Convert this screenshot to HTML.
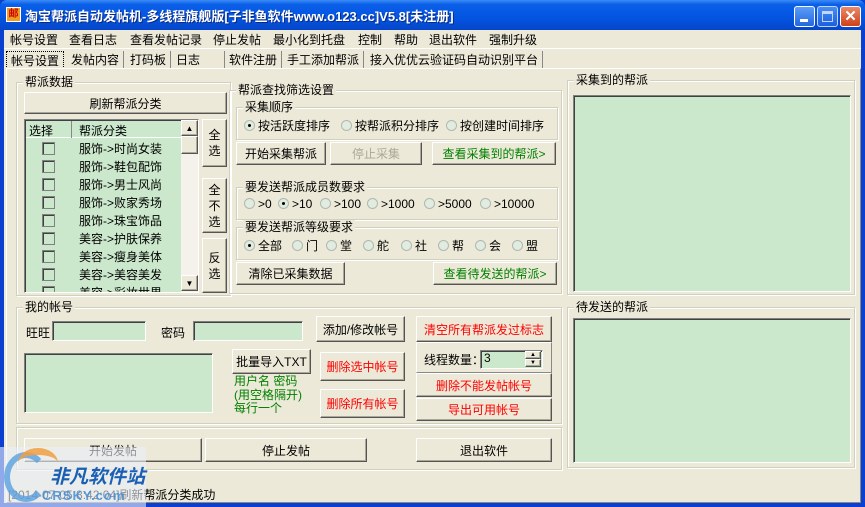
<!DOCTYPE html>
<html><head><meta charset="utf-8"><style>
*{box-sizing:border-box;margin:0;padding:0}
body{width:865px;height:507px;overflow:hidden;background:#0a3fd0;font-family:"Liberation Sans","Noto Sans CJK SC",sans-serif;font-size:12px;color:#000;position:relative}
.a{position:absolute}
#title{left:0;top:0;width:865px;height:30px;background:linear-gradient(#3b8cf5 0,#0a5fe8 15%,#0454e2 60%,#0546c8 100%);border-radius:7px 7px 0 0}
#title .t{left:25px;top:6px;color:#fff;font-weight:bold;font-size:13px;white-space:nowrap;text-shadow:1px 1px #0a2a80}
.ico{left:6px;top:7px;width:15px;height:15px;background:#f0a020;border:1px solid #fff;font-size:10px;color:#c00;text-align:center;line-height:13px;font-weight:bold}
.wb{top:6px;width:21px;height:21px;border:1px solid #fff;border-radius:3px;background:linear-gradient(#5b9df8,#2466e0)}
#client{left:4px;top:30px;width:857px;height:473px;background:#ece9d8}
.menu span{position:absolute;top:0;white-space:nowrap}
.tabs .tab{position:absolute;top:0;height:18px;border-right:1px solid #888;white-space:nowrap;padding:0 4px}
.panel{border-top:1px solid #fff;border-left:1px solid #fff;border-right:1px solid #888;border-bottom:1px solid #888}
.grp{border:1px solid #d0d0bf;box-shadow:inset 1px 1px #fff,1px 1px #fff}
.gt{position:absolute;top:-8px;left:6px;background:#ece9d8;padding:0 2px;white-space:nowrap;line-height:14px}
.btn{position:absolute;background:#ece9d8;border:1px solid;border-color:#fff #555 #555 #fff;box-shadow:inset -1px -1px #aca899;text-align:center;white-space:nowrap;display:flex;align-items:center;justify-content:center}
.red{color:#f00}.grn{color:#008000}
.gr{background:#cce8cc}
.sunk{border:1px solid;border-color:#808080 #fff #fff #808080;box-shadow:inset 1px 1px #404040}
.rad{position:absolute;white-space:nowrap}
.rad i{display:inline-block;width:11px;height:11px;border-radius:50%;background:#e0ece0;border:1px solid #b0b8b0;vertical-align:-1px;margin-right:3px;position:relative}
.rad i.on:after{content:"";position:absolute;left:3px;top:3px;width:3px;height:3px;background:#000;border-radius:50%}
.row{position:absolute;left:1px;width:155px;height:18px;white-space:nowrap}
.row b{position:absolute;left:16px;top:3px;width:13px;height:13px;border:1px solid #808080;background:#cce8cc;box-shadow:inset 1px 1px #404040}
.row span{position:absolute;left:53px;top:1px}
</style></head><body>
<div id="title" class="a"><div class="a ico">邮</div><div class="a t">淘宝帮派自动发帖机-多线程旗舰版[子非鱼软件www.o123.cc]V5.8[未注册]</div>
<div class="a wb" style="left:794px;"><div class="a" style="left:5px;top:12px;width:8px;height:3px;background:#fff"></div></div>
<div class="a wb" style="left:817px;opacity:.75"><div class="a" style="left:4px;top:4px;width:11px;height:11px;border:1px solid #fff;border-top-width:3px"></div></div>
<div class="a wb" style="left:840px;background:linear-gradient(#e88a6a,#d04018);color:#fff;font-weight:bold;font-size:15px;text-align:center;line-height:19px">✕</div>
</div>
<div id="client" class="a">
<div class="a menu" style="left:0;top:1px;width:840px;height:17px">
<span style="left:6px">帐号设置</span><span style="left:65px">查看日志</span><span style="left:126px">查看发帖记录</span><span style="left:209px">停止发帖</span><span style="left:269px">最小化到托盘</span><span style="left:354px">控制</span><span style="left:390px">帮助</span><span style="left:425px">退出软件</span><span style="left:485px">强制升级</span>
</div>
<div class="a" style="left:0;top:18px;width:857px;height:1px;background:#fff"></div>
<div class="a tabs" style="left:2px;top:21px;width:600px;height:18px">
<div class="tab" style="left:0;width:58px;border:1px dotted #000;">帐号设置</div>
<div class="tab" style="left:61px">发帖内容</div><div class="tab" style="left:120px">打码板</div><div class="tab" style="left:166px;width:53px">日志</div><div class="tab" style="left:219px">软件注册</div><div class="tab" style="left:277px">手工添加帮派</div><div class="tab" style="left:360px">接入优优云验证码自动识别平台</div>
</div>
<div class="a panel" style="left:2px;top:38px;width:855px;height:435px"></div>

<div class="a grp" style="left:12px;top:52px;width:215px;height:214px"><div class="gt">帮派数据</div></div>
<div class="btn" style="left:20px;top:62px;width:203px;height:22px">刷新帮派分类</div>
<div class="a sunk gr" style="left:20px;top:89px;width:175px;height:174px;overflow:hidden">
<div class="a" style="left:1px;top:1px;width:155px;height:17px;background:#cce8cc;border-bottom:1px solid #fff"><span class="a" style="left:3px;top:1px">选择</span><div class="a" style="left:45px;top:0;width:1px;height:17px;background:#888"></div><span class="a" style="left:53px;top:1px">帮派分类</span></div>
<div class="row" style="top:19px"><b></b><span>服饰->时尚女装</span></div>
<div class="row" style="top:37px"><b></b><span>服饰->鞋包配饰</span></div>
<div class="row" style="top:55px"><b></b><span>服饰->男士风尚</span></div>
<div class="row" style="top:73px"><b></b><span>服饰->败家秀场</span></div>
<div class="row" style="top:91px"><b></b><span>服饰->珠宝饰品</span></div>
<div class="row" style="top:109px"><b></b><span>美容->护肤保养</span></div>
<div class="row" style="top:127px"><b></b><span>美容->瘦身美体</span></div>
<div class="row" style="top:145px"><b></b><span>美容->美容美发</span></div>
<div class="row" style="top:163px"><b></b><span>美容->彩妆世界</span></div>
<div class="a" style="left:156px;top:0;width:17px;height:172px;background:#f4f2ea">
<div class="btn" style="left:0;top:0;width:17px;height:16px;font-size:8px">▲</div>
<div class="btn" style="left:0;top:16px;width:17px;height:18px"></div>
<div class="btn" style="left:0;top:155px;width:17px;height:16px;font-size:8px">▼</div></div>
</div>
<div class="btn" style="left:198px;top:89px;width:25px;height:48px;line-height:16px">全<br>选</div>
<div class="btn" style="left:198px;top:148px;width:25px;height:55px;line-height:16px">全<br>不<br>选</div>
<div class="btn" style="left:198px;top:208px;width:25px;height:55px;line-height:16px">反<br>选</div>

<div class="a grp" style="left:225px;top:60px;width:333px;height:204px"><div class="gt">帮派查找筛选设置</div></div>
<div class="a grp" style="left:232px;top:77px;width:322px;height:33px"><div class="gt">采集顺序</div></div>
<div class="rad" style="left:240px;top:87px"><i class="on"></i>按活跃度排序</div>
<div class="rad" style="left:337px;top:87px"><i></i>按帮派积分排序</div>
<div class="rad" style="left:442px;top:87px"><i></i>按创建时间排序</div>
<div class="btn" style="left:232px;top:112px;width:90px;height:23px">开始采集帮派</div>
<div class="btn" style="left:326px;top:112px;width:92px;height:23px;color:#aca899">停止采集</div>
<div class="btn grn" style="left:428px;top:112px;width:124px;height:23px">查看采集到的帮派&gt;</div>
<div class="a grp" style="left:232px;top:157px;width:322px;height:33px"><div class="gt">要发送帮派成员数要求</div></div>
<div class="rad" style="left:240px;top:167px"><i></i>&gt;0</div>
<div class="rad" style="left:274px;top:167px"><i class="on"></i>&gt;10</div>
<div class="rad" style="left:316px;top:167px"><i></i>&gt;100</div>
<div class="rad" style="left:363px;top:167px"><i></i>&gt;1000</div>
<div class="rad" style="left:420px;top:167px"><i></i>&gt;5000</div>
<div class="rad" style="left:476px;top:167px"><i></i>&gt;10000</div>
<div class="a grp" style="left:232px;top:197px;width:322px;height:33px"><div class="gt">要发送帮派等级要求</div></div>
<div class="rad" style="left:240px;top:207px"><i class="on"></i>全部</div>
<div class="rad" style="left:288px;top:207px"><i></i>门</div>
<div class="rad" style="left:322px;top:207px"><i></i>堂</div>
<div class="rad" style="left:359px;top:207px"><i></i>舵</div>
<div class="rad" style="left:397px;top:207px"><i></i>社</div>
<div class="rad" style="left:434px;top:207px"><i></i>帮</div>
<div class="rad" style="left:471px;top:207px"><i></i>会</div>
<div class="rad" style="left:508px;top:207px"><i></i>盟</div>
<div class="btn" style="left:232px;top:232px;width:109px;height:23px">清除已采集数据</div>
<div class="btn grn" style="left:429px;top:232px;width:124px;height:23px">查看待发送的帮派&gt;</div>

<div class="a grp" style="left:563px;top:50px;width:288px;height:215px"><div class="gt">采集到的帮派</div></div>
<div class="a sunk gr" style="left:569px;top:65px;width:278px;height:197px"></div>
<div class="a grp" style="left:563px;top:277px;width:288px;height:161px"><div class="gt">待发送的帮派</div></div>
<div class="a sunk gr" style="left:569px;top:288px;width:278px;height:145px"></div>

<div class="a grp" style="left:12px;top:277px;width:546px;height:117px"><div class="gt">我的帐号</div></div>
<div class="a" style="left:22px;top:294px">旺旺</div>
<div class="a sunk gr" style="left:48px;top:291px;width:94px;height:20px"></div>
<div class="a" style="left:157px;top:294px">密码</div>
<div class="a sunk gr" style="left:189px;top:291px;width:110px;height:20px"></div>
<div class="btn" style="left:312px;top:286px;width:89px;height:26px">添加/修改帐号</div>
<div class="btn red" style="left:412px;top:286px;width:136px;height:26px">清空所有帮派发过标志</div>
<div class="a sunk gr" style="left:20px;top:323px;width:189px;height:60px"></div>
<div class="btn" style="left:228px;top:319px;width:79px;height:25px">批量导入TXT</div>
<div class="a grn" style="left:230px;top:345px;line-height:13.5px;white-space:nowrap">用户名 密码<br>(用空格隔开)<br>每行一个</div>
<div class="btn red" style="left:316px;top:322px;width:85px;height:29px">删除选中帐号</div>
<div class="btn red" style="left:316px;top:359px;width:85px;height:29px">删除所有帐号</div>
<div class="a" style="left:412px;top:312px;width:136px;height:31px;border:1px solid;border-color:#fff #888 #888 #fff"></div>
<div class="a" style="left:420px;top:321px">线程数量：</div>
<div class="a sunk gr" style="left:476px;top:320px;width:63px;height:19px;padding-left:3px">3
<div class="btn" style="left:44px;top:0;width:16px;height:8px;font-size:6px">▲</div><div class="btn" style="left:44px;top:8px;width:16px;height:8px;font-size:6px">▼</div></div>
<div class="btn red" style="left:412px;top:343px;width:136px;height:24px">删除不能发帖帐号</div>
<div class="btn red" style="left:412px;top:368px;width:136px;height:23px">导出可用帐号</div>

<div class="a grp" style="left:12px;top:397px;width:546px;height:43px"></div>
<div class="btn" style="left:20px;top:408px;width:178px;height:24px">开始发帖</div>
<div class="btn" style="left:201px;top:408px;width:162px;height:24px">停止发帖</div>
<div class="btn" style="left:412px;top:408px;width:136px;height:24px">退出软件</div>
<div class="a" style="left:4px;top:456px;white-space:nowrap">[2014-07-05 8:42:04]刷新帮派分类成功</div>
</div>
<div class="a" style="left:0;top:447px;width:146px;height:60px;background:rgba(235,240,250,.6)"></div>
<div class="a" style="left:4px;top:452px;width:44px;height:50px;border-radius:50%;border:6px solid #5aa0e0;border-right-color:transparent;opacity:.8"></div>
<div class="a" style="left:18px;top:448px;width:40px;height:30px;border-radius:50%;border-top:7px solid #f0a040;opacity:.85"></div>
<div class="a" style="left:50px;top:462px;font-size:19px;font-weight:bold;color:#1a5fb4;font-style:italic;white-space:nowrap">非凡软件站</div>
<div class="a" style="left:42px;top:488px;font-size:13px;font-weight:bold;color:#3a8ad8;opacity:.8;letter-spacing:1px">CRSKY.com</div>
</body></html>
